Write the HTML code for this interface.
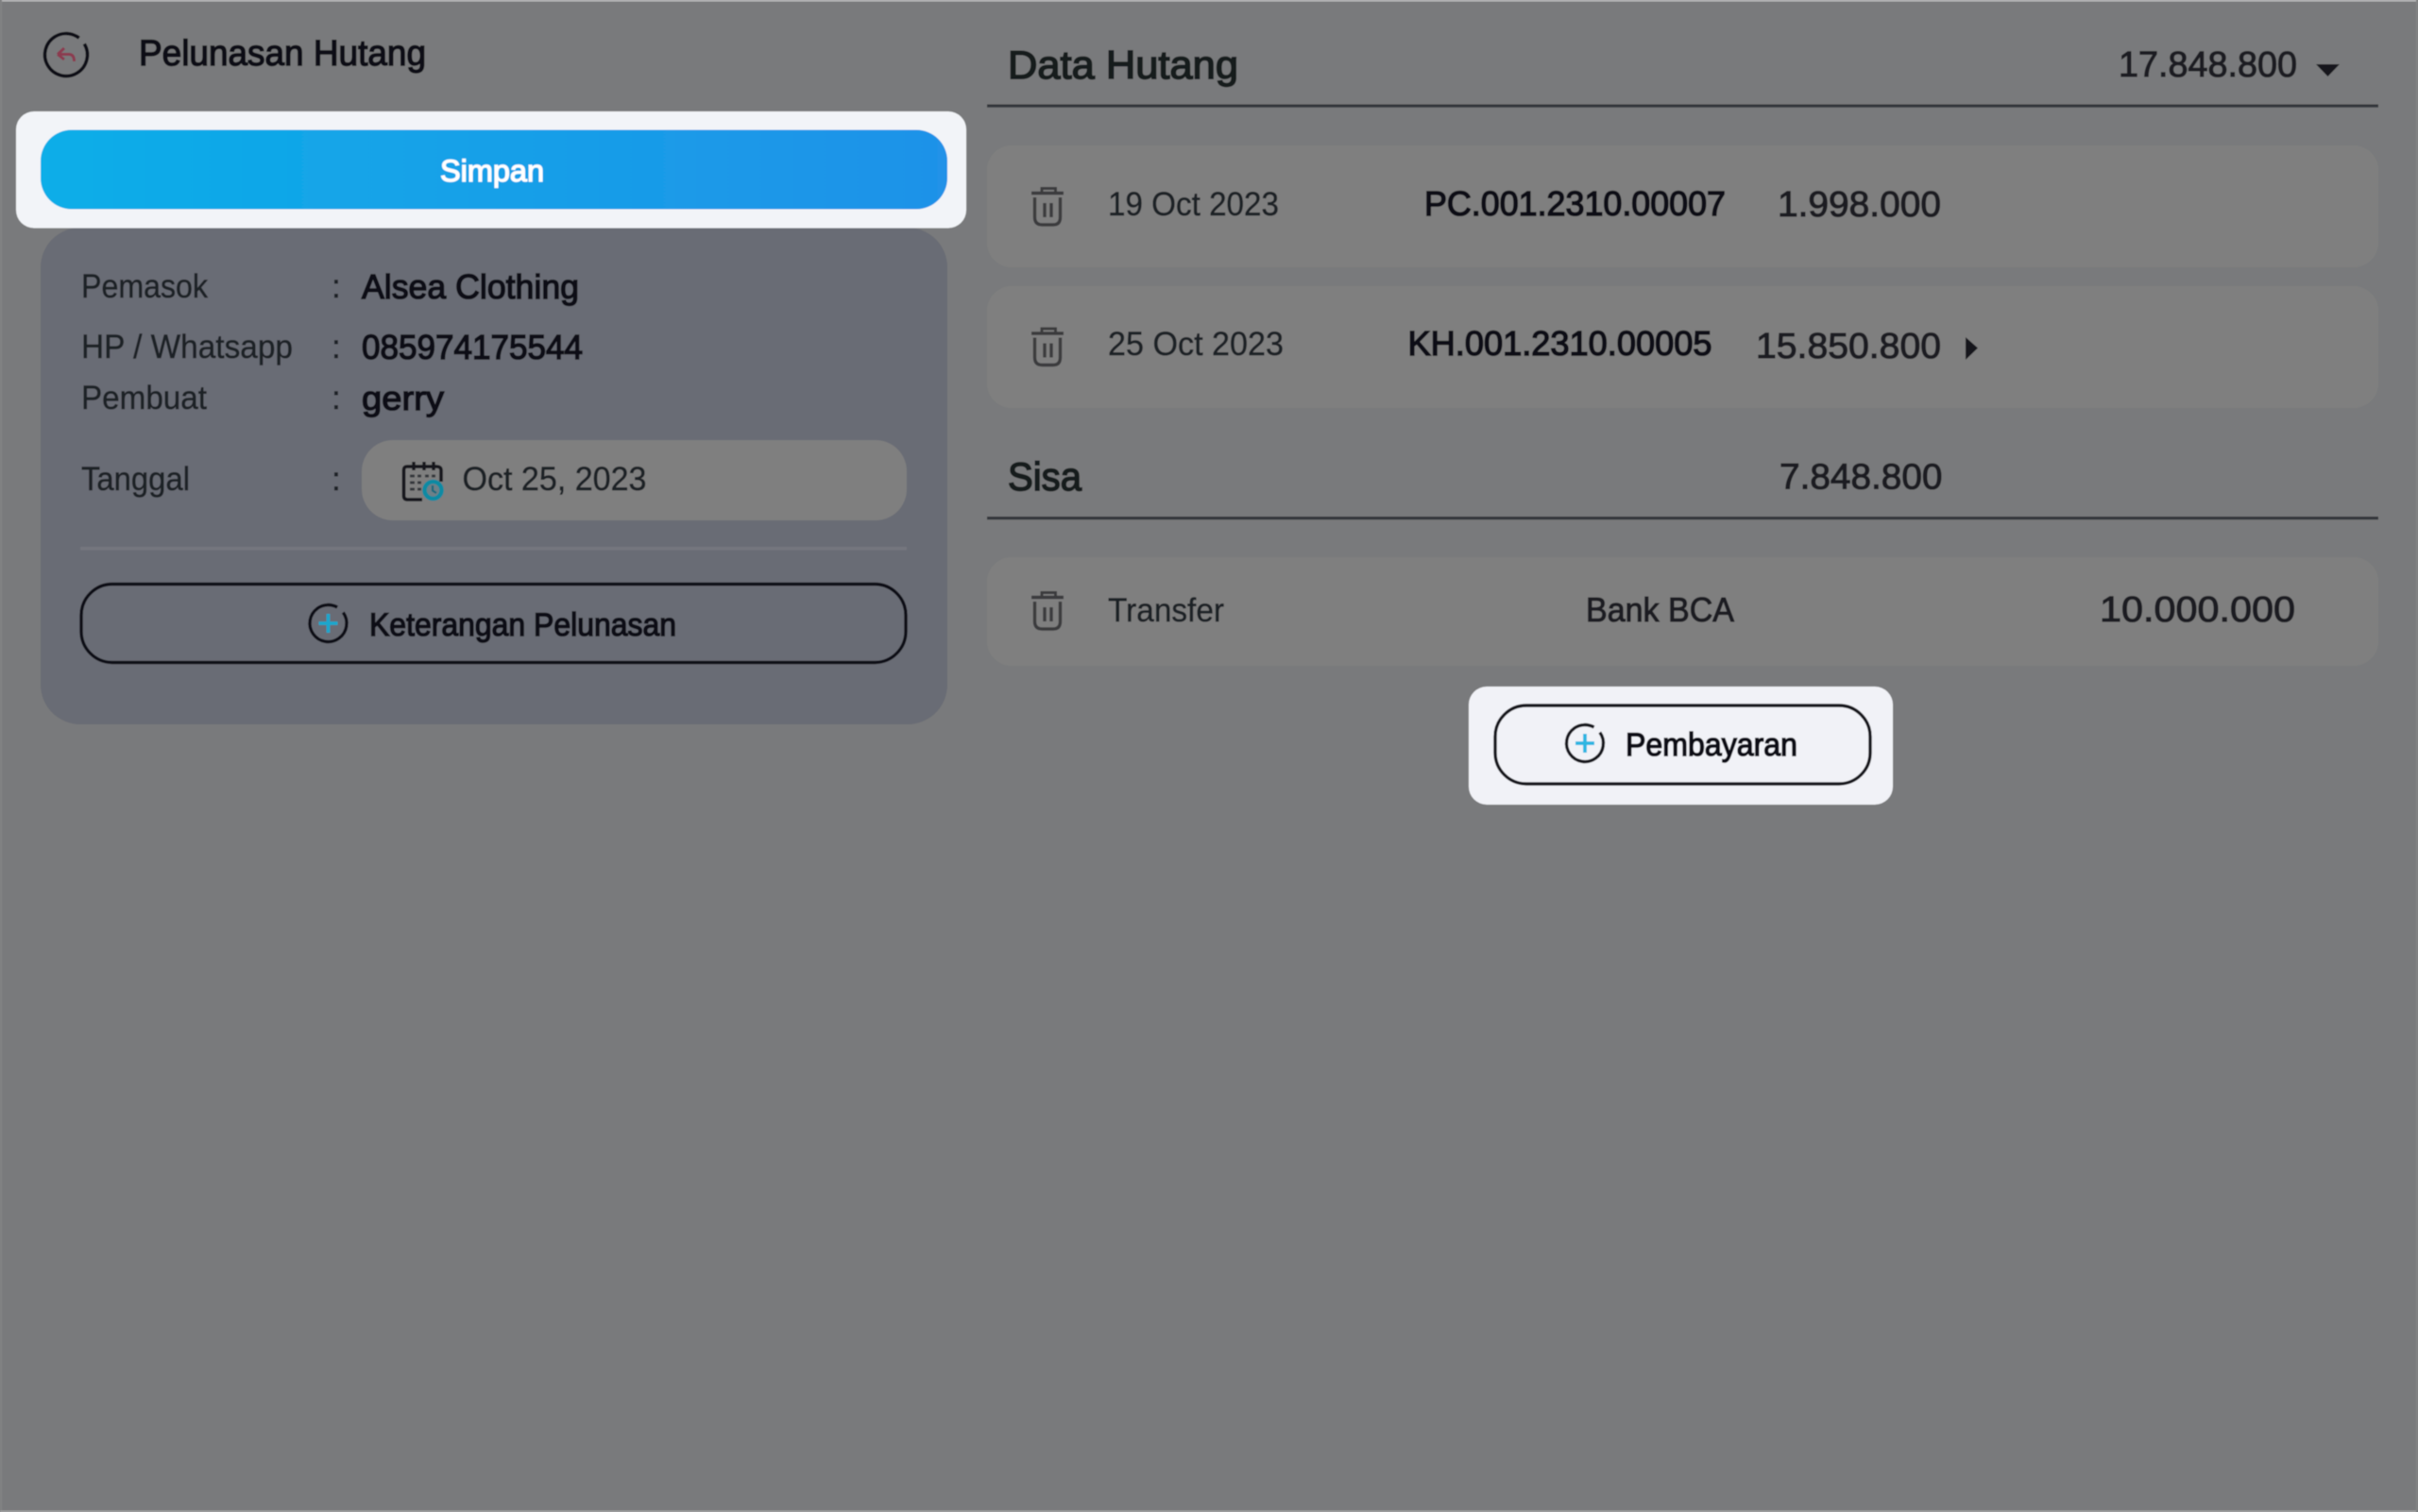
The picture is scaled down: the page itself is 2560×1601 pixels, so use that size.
<!DOCTYPE html>
<html><head><meta charset="utf-8"><title>Pelunasan Hutang</title>
<style>
html,body{margin:0;padding:0;width:2560px;height:1601px;overflow:hidden;background:#797a7c}
svg{display:block;position:absolute;left:0;top:0}
text{font-family:"Liberation Sans",sans-serif;dominant-baseline:alphabetic}
.m{fill:#0f1115;stroke:#0f1115;stroke-width:1.5px}
.r{fill:#1e2025;stroke:#1e2025;stroke-width:.5px}
.b{fill:#1c1e22;stroke:#1c1e22;stroke-width:1.1px}
</style></head>
<body>
<svg width="2560" height="1601" viewBox="0 0 2560 1601" xmlns="http://www.w3.org/2000/svg">
<defs>
<linearGradient id="g" x1="0" x2="1" y1="0" y2="0"><stop offset="0" stop-color="#0caee8"/><stop offset="1" stop-color="#2092e8"/></linearGradient>
<filter id="s" x="0" y="0" width="100%" height="100%"><feGaussianBlur stdDeviation="0.6"/></filter>
<g id="trash" fill="none" stroke="#3a3b3e" stroke-width="3.400">
<path d="M1092 204.500H1126" stroke-width="3.600"/>
<path d="M1103 204V199.500H1117.500V204" stroke-width="3"/>
<path d="M1095.500 209V230Q1095.500 238 1103.500 238H1115Q1122.500 238 1122.500 230V209"/>
<path d="M1106 215V230M1113 215V230"/>
</g>
</defs>
<g filter="url(#s)">
<rect width="2560" height="1601" fill="#797a7c"/>
<rect width="2560" height="1.500" fill="#c2c2c2"/>
<rect width="2" height="1601" fill="#828384"/>
<rect y="1599.500" width="2560" height="1.500" fill="#a8a8a8"/>
<rect x="2558" width="2" height="1601" fill="#828384"/>

<!-- header left -->
<circle cx="70" cy="58" r="22.500" fill="none" stroke="#0e1014" stroke-width="3.600" stroke-dasharray="132.800 8.600" transform="rotate(-31 70 58)"/>
<path d="M61 57.500H73Q78.500 57.500 78.500 65M61 57.500L68 51M61 57.500L68 63" fill="none" stroke="#8b3a50" stroke-width="3"/>
<text class="m" x="147" y="69" font-size="38" textLength="304" lengthAdjust="spacingAndGlyphs">Pelunasan Hutang</text>

<!-- left panel -->
<rect x="43" y="241" width="960" height="526" rx="42" fill="#696c75"/>
<rect x="17" y="118" width="1006" height="123.500" rx="19" fill="#f2f4f8"/>
<rect x="43" y="137.500" width="960" height="84" rx="33" fill="url(#g)"/>
<text x="466" y="192" font-size="32" fill="#fff" stroke="#fff" stroke-width="1.200" textLength="110" lengthAdjust="spacingAndGlyphs">Simpan</text>

<text class="r" x="86" y="315" font-size="35" textLength="134" lengthAdjust="spacingAndGlyphs">Pemasok</text>
<text class="r" x="351" y="315" font-size="35">:</text>
<text class="m" x="383" y="316" font-size="36" textLength="230" lengthAdjust="spacingAndGlyphs">Alsea Clothing</text>

<text class="r" x="86" y="379" font-size="35" textLength="224" lengthAdjust="spacingAndGlyphs">HP / Whatsapp</text>
<text class="r" x="351" y="379" font-size="35">:</text>
<text class="m" x="383" y="380" font-size="36" textLength="234" lengthAdjust="spacingAndGlyphs">085974175544</text>

<text class="r" x="86" y="433" font-size="35" textLength="133" lengthAdjust="spacingAndGlyphs">Pembuat</text>
<text class="r" x="351" y="433" font-size="35">:</text>
<text class="m" x="383" y="434" font-size="36" textLength="87" lengthAdjust="spacingAndGlyphs">gerry</text>

<text class="r" x="86" y="519" font-size="35" textLength="115" lengthAdjust="spacingAndGlyphs">Tanggal</text>
<text class="r" x="351" y="519" font-size="35">:</text>
<rect x="383" y="466" width="577" height="85" rx="33" fill="#7f7f7f"/>
<!-- calendar icon -->
<g fill="none">
<path d="M441 494H431Q427.500 494 427.500 498V525Q427.500 529 431.500 529H447" stroke="#16181d" stroke-width="3.600"/>
<path d="M441 494H462Q467 494 467 498V510" stroke="#16181d" stroke-width="3.600"/>
<path d="M438 489V498M449 489V498M459 489V498" stroke="#16181d" stroke-width="3.400"/>
<path d="M434 504H439M442 504H446M450 504H454M457 504H461M434 511H439M442 511H446M434 518H439M442 518H446" stroke="#34373d" stroke-width="3"/>
<circle cx="458.500" cy="519" r="9" fill="#6e8088" stroke="#118aa3" stroke-width="4.600"/>
<path d="M458 514V519.500L462 522" stroke="#14687c" stroke-width="2.200"/>
</g>
<text class="r" x="489.500" y="519" font-size="35" textLength="195" lengthAdjust="spacingAndGlyphs">Oct 25, 2023</text>

<rect x="85" y="579" width="875" height="3.500" fill="#74767e"/>

<rect x="86" y="618.500" width="873" height="83" rx="33" fill="none" stroke="#0e1116" stroke-width="3.400"/>
<circle cx="347.500" cy="660" r="19.500" fill="none" stroke="#0e1116" stroke-width="3.400" stroke-dasharray="114 8.500" transform="rotate(-36 347.500 660)"/>
<path d="M347.500 650V670M337.500 660H357.500" stroke="#1ea6cc" stroke-width="3.800"/>
<text class="m" x="391" y="673" font-size="34" textLength="325" lengthAdjust="spacingAndGlyphs">Keterangan Pelunasan</text>

<!-- right header -->
<text class="m" x="1067" y="83" font-size="42" textLength="244" lengthAdjust="spacingAndGlyphs" style="fill:#191b1f;stroke:#191b1f;stroke-width:1.700px">Data Hutang</text>
<text class="b" x="2243" y="81" font-size="38" textLength="189" lengthAdjust="spacingAndGlyphs">17.848.800</text>
<path d="M2452 68H2477L2464.500 81Z" fill="#17191d"/>
<rect x="1045" y="110.500" width="1473" height="3.200" fill="#33353a"/>

<!-- rows -->
<rect x="1045" y="154" width="1473" height="129" rx="26" fill="#7f7f7f"/>
<use href="#trash"/>
<text class="r" x="1173" y="228" font-size="35" textLength="181" lengthAdjust="spacingAndGlyphs">19 Oct 2023</text>
<text class="m" x="1508" y="228" font-size="36" textLength="319" lengthAdjust="spacingAndGlyphs">PC.001.2310.00007</text>
<text class="b" x="1882" y="229" font-size="38" textLength="173" lengthAdjust="spacingAndGlyphs">1.998.000</text>

<rect x="1045" y="303" width="1473" height="129" rx="26" fill="#7f7f7f"/>
<use href="#trash" y="148.500"/>
<text class="r" x="1173" y="376" font-size="35" textLength="186" lengthAdjust="spacingAndGlyphs">25 Oct 2023</text>
<text class="m" x="1490.500" y="376" font-size="36" textLength="322" lengthAdjust="spacingAndGlyphs">KH.001.2310.00005</text>
<text class="b" x="1859" y="379" font-size="38" textLength="196" lengthAdjust="spacingAndGlyphs">15.850.800</text>
<path d="M2081 357L2094 368.500L2081 381Z" fill="#17191d"/>

<text class="m" x="1067" y="519" font-size="42" textLength="78" lengthAdjust="spacingAndGlyphs" style="fill:#191b1f;stroke:#191b1f;stroke-width:1.700px">Sisa</text>
<text class="b" x="1884" y="517.500" font-size="38" textLength="172.500" lengthAdjust="spacingAndGlyphs">7.848.800</text>
<rect x="1045" y="547" width="1473" height="3.200" fill="#33353a"/>

<rect x="1045" y="590" width="1473" height="115" rx="26" fill="#7f7f7f"/>
<use href="#trash" y="428"/>
<text class="r" x="1173" y="658" font-size="35" textLength="123" lengthAdjust="spacingAndGlyphs">Transfer</text>
<text class="b" x="1679" y="658" font-size="36" textLength="157" lengthAdjust="spacingAndGlyphs">Bank BCA</text>
<text class="b" x="2223" y="658" font-size="38" textLength="207" lengthAdjust="spacingAndGlyphs">10.000.000</text>

<!-- Pembayaran -->
<rect x="1555" y="727" width="449" height="125" rx="19" fill="#f1f2f7"/>
<rect x="1583" y="747" width="397" height="83" rx="33" fill="none" stroke="#14161b" stroke-width="3.400"/>
<circle cx="1678" cy="787" r="19.500" fill="none" stroke="#14161b" stroke-width="3.400" stroke-dasharray="114 8.500" transform="rotate(-36 1678 787)"/>
<path d="M1678 777V797M1668 787H1688" stroke="#2fb6e2" stroke-width="3.800"/>
<text class="m" x="1721" y="800" font-size="34" textLength="182" lengthAdjust="spacingAndGlyphs">Pembayaran</text>
</g>
</svg>
</body></html>
